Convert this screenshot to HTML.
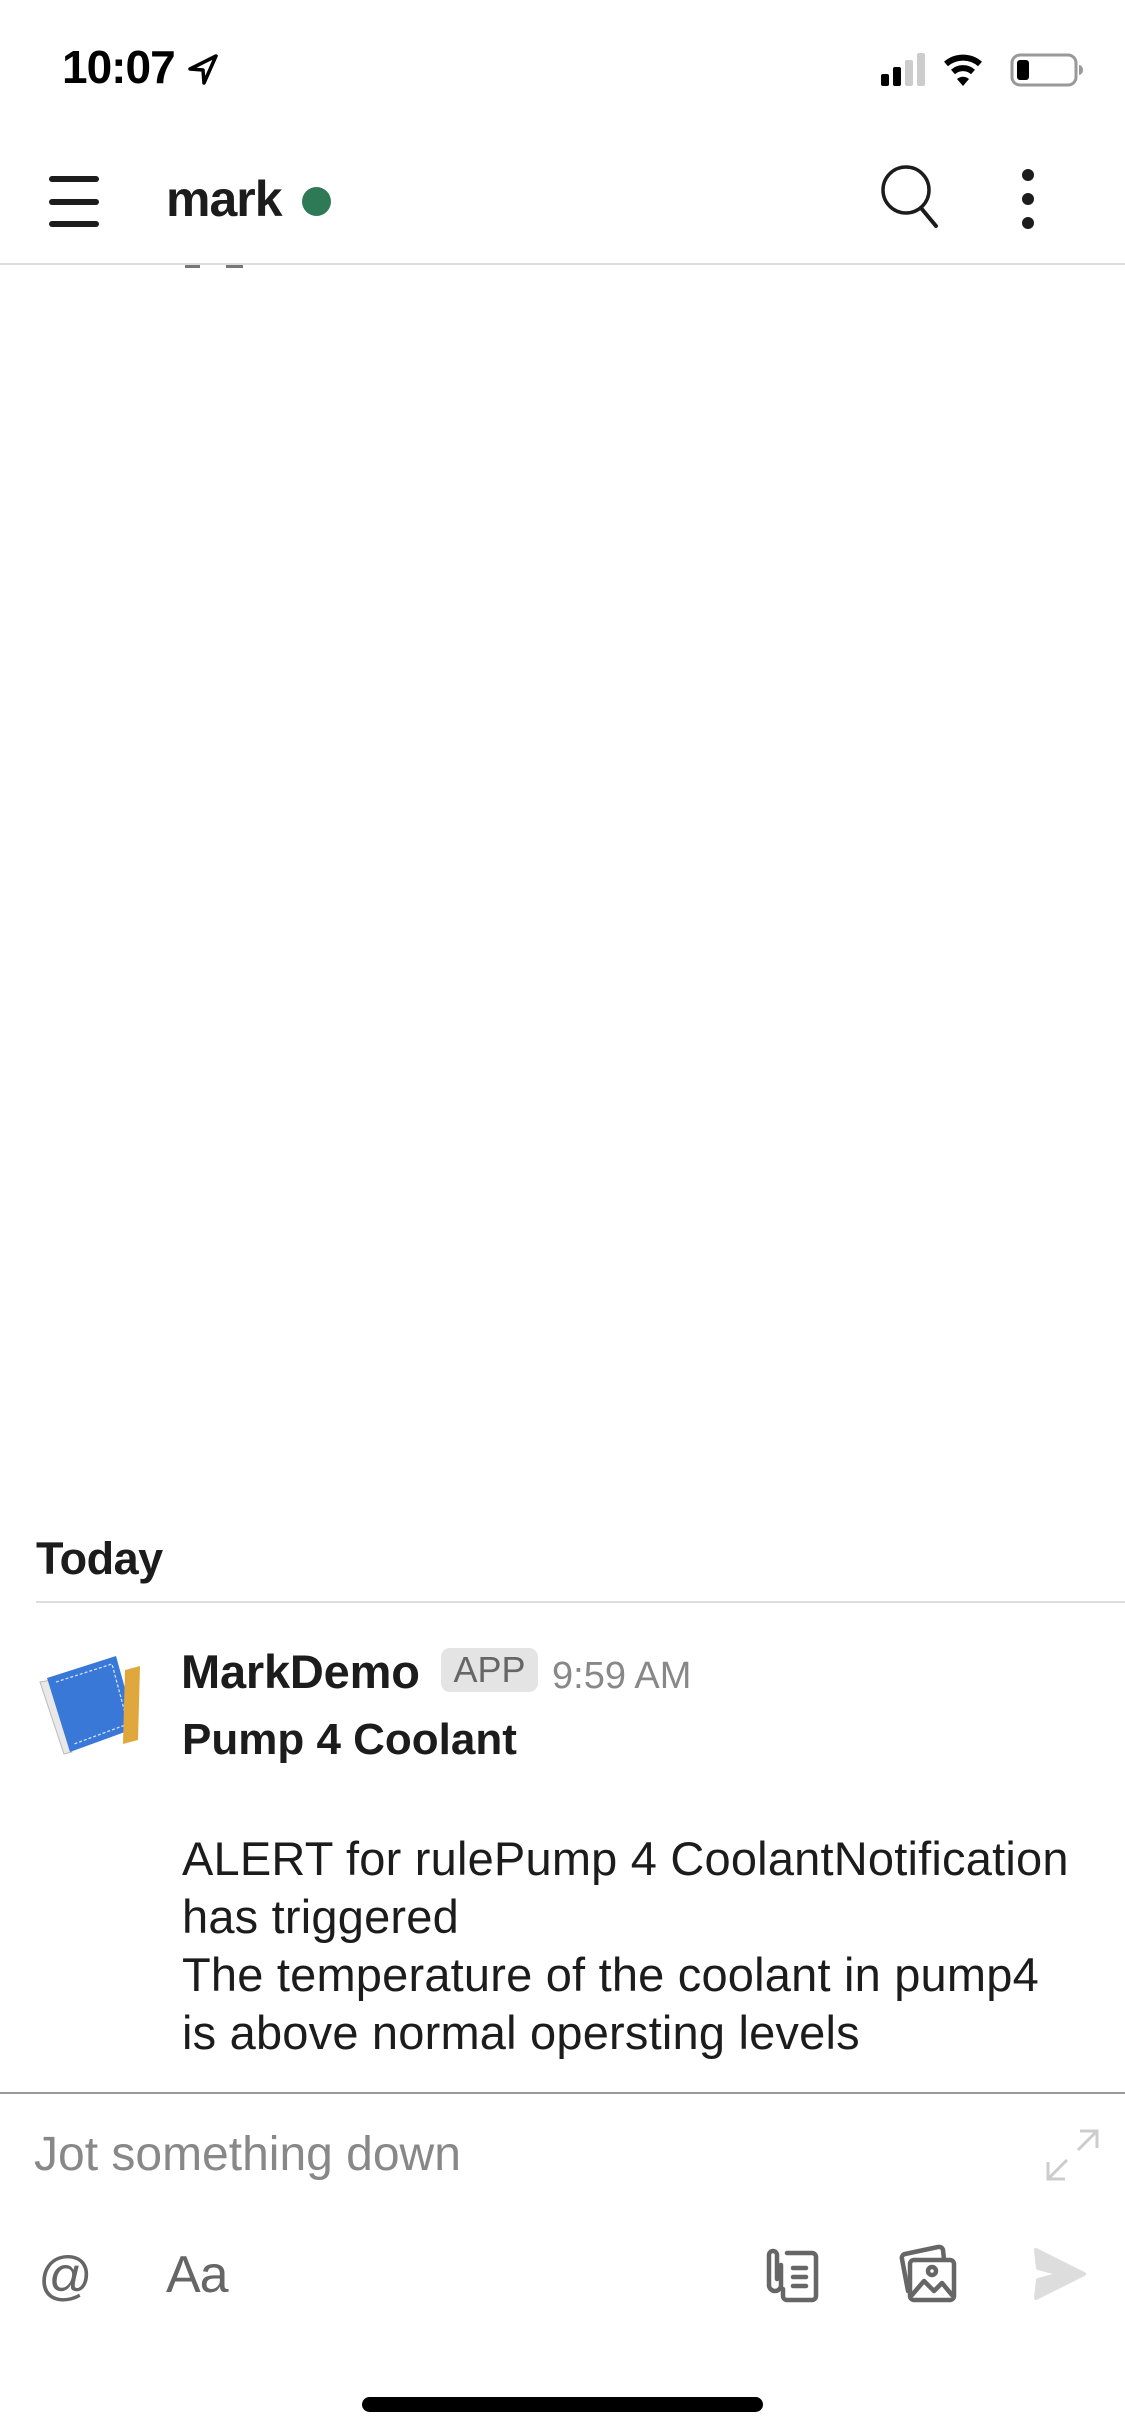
<!DOCTYPE html>
<html><head><meta charset="utf-8"><style>
*{margin:0;padding:0;box-sizing:border-box}
body{width:1125px;height:2436px;background:#fff;position:relative;overflow:hidden;font-family:"Liberation Sans",sans-serif;color:#1d1c1d}
.a{position:absolute;white-space:nowrap}
</style></head><body>
<div class="a" style="left:62px;top:40px;font-size:46px;font-weight:bold;letter-spacing:-1px;color:#000">10:07</div>
<svg class="a" style="left:186px;top:52px" width="34" height="34" viewBox="0 0 34 34"><path d="M30 4 L4 17 L17 18 L18 31 Z" fill="none" stroke="#000" stroke-width="3.5" stroke-linejoin="round"/></svg>
<svg class="a" style="left:878px;top:50px" width="210" height="40" viewBox="0 0 210 40">
<rect x="3" y="24" width="8" height="12" rx="2" fill="#000"/><rect x="15" y="17" width="8" height="19" rx="2" fill="#000"/>
<rect x="27" y="10" width="8" height="26" rx="2" fill="#ccc"/><rect x="39" y="3" width="8" height="33" rx="2" fill="#ccc"/>
<path d="M68 14 A26 26 0 0 1 102 14" fill="none" stroke="#000" stroke-width="6"/>
<path d="M75 22 A15 15 0 0 1 95 22" fill="none" stroke="#000" stroke-width="6"/>
<path d="M85 36 L79 29 A9 9 0 0 1 91 29 Z" fill="#000"/>
<rect x="134" y="5" width="64" height="30" rx="8" fill="none" stroke="#999" stroke-width="3"/>
<rect x="139" y="10" width="12" height="20" rx="3" fill="#000"/>
<path d="M201 15 a4 5 0 0 1 0 10" fill="#999"/>
</svg>
<div class="a" style="left:49px;top:176px;width:50px;height:6px;background:#1d1c1d;border-radius:3px"></div>
<div class="a" style="left:49px;top:199px;width:50px;height:6px;background:#1d1c1d;border-radius:3px"></div>
<div class="a" style="left:49px;top:221px;width:50px;height:6px;background:#1d1c1d;border-radius:3px"></div>
<div class="a" style="left:166px;top:170px;font-size:50px;font-weight:bold;letter-spacing:-1px">mark</div>
<div class="a" style="left:302px;top:187px;width:29px;height:29px;border-radius:50%;background:#2e7a57"></div>
<svg class="a" style="left:876px;top:160px" width="66" height="70" viewBox="0 0 66 70"><circle cx="30" cy="30" r="23" fill="none" stroke="#1d1c1d" stroke-width="3.5"/><path d="M45 48 L60 66" stroke="#1d1c1d" stroke-width="4" stroke-linecap="round"/></svg>
<div class="a" style="left:1022px;top:169px;width:12px;height:12px;border-radius:50%;background:#1d1c1d"></div>
<div class="a" style="left:1022px;top:193px;width:12px;height:12px;border-radius:50%;background:#1d1c1d"></div>
<div class="a" style="left:1022px;top:217px;width:12px;height:12px;border-radius:50%;background:#1d1c1d"></div>
<div class="a" style="left:0;top:263px;width:1125px;height:2px;background:#ddd"></div>
<div class="a" style="left:185px;top:265px;width:15px;height:3px;background:#777"></div>
<div class="a" style="left:226px;top:265px;width:17px;height:3px;background:#777"></div>

<div class="a" style="left:36px;top:1533px;font-size:45px;font-weight:bold;letter-spacing:-0.5px">Today</div>
<div class="a" style="left:36px;top:1601px;width:1089px;height:2px;background:#ddd"></div>

<svg class="a" style="left:30px;top:1640px" width="130" height="130" viewBox="0 0 130 130">
<path d="M10 42 L22 40 L42 112 L34 114 Z" fill="#e8e8e8" stroke="#bbb" stroke-width="1"/>
<path d="M17 38 L86 16 L106 88 L40 112 Z" fill="#3a78d8"/>
<path d="M26 42 L82 24 L98 84 L44 104" fill="none" stroke="#cfe0f7" stroke-width="1.3" stroke-dasharray="3 2"/>
<path d="M95 30 L110 26 L108 100 L93 104 Z" fill="#e0a83c"/>
</svg>
<div class="a" style="left:181px;top:1644px;font-size:47px;font-weight:bold;letter-spacing:-0.2px">MarkDemo</div>
<div class="a" style="left:441px;top:1648px;width:97px;height:44px;background:#e4e4e4;border-radius:9px;color:#666;font-size:36px;text-align:center;line-height:44px">APP</div>
<div class="a" style="left:552px;top:1655px;font-size:38px;color:#888">9:59 AM</div>
<div class="a" style="left:182px;top:1715px;font-size:44px;font-weight:bold;letter-spacing:0px">Pump 4 Coolant</div>
<div class="a" style="left:182px;top:1830px;font-size:47px;line-height:58px;letter-spacing:0.2px">ALERT for rulePump 4 CoolantNotification<br>has triggered<br>The temperature of the coolant in pump4<br>is above normal opersting levels</div>

<div class="a" style="left:0;top:2092px;width:1125px;height:2px;background:#999"></div>
<div class="a" style="left:34px;top:2127px;font-size:48px;color:#888">Jot something down</div>
<svg class="a" style="left:1044px;top:2127px" width="58" height="56" viewBox="0 0 58 56"><path d="M36 4 H53 V21 M53 4 L34 23 M4 35 V52 H21 M4 52 L23 33" fill="none" stroke="#ccc" stroke-width="3"/></svg>
<div class="a" style="left:38px;top:2245px;font-size:54px;color:#666">@</div>
<div class="a" style="left:166px;top:2245px;font-size:52px;color:#666;letter-spacing:-1px">Aa</div>
<svg class="a" style="left:765px;top:2245px" width="58" height="58" viewBox="0 0 58 58"><g fill="none" stroke="#666" stroke-width="4.5" stroke-linecap="round" stroke-linejoin="round"><path d="M16 20 V40 a6 6 0 0 1 -12 0 V10 a4 4 0 0 1 8 0 V34"/><path d="M22 8 H47 a4 4 0 0 1 4 4 V51 a4 4 0 0 1 -4 4 H22 a4 4 0 0 1 -4 -4 V44"/><path d="M28 23 H41 M28 32 H41 M28 41 H41"/></g></svg>
<svg class="a" style="left:894px;top:2243px" width="66" height="62" viewBox="0 0 66 62"><g fill="none" stroke="#666" stroke-width="4.5" stroke-linecap="round" stroke-linejoin="round"><path d="M14 48 L8 16 a4 4 0 0 1 3 -5 L44 4 a4 4 0 0 1 5 3 L50 16"/><rect x="16" y="17" width="44" height="40" rx="4"/><circle cx="38" cy="28" r="4"/><path d="M18 52 L30 38 L40 48 L48 40 L58 52"/></g></svg>
<svg class="a" style="left:1030px;top:2246px" width="58" height="56" viewBox="0 0 58 56"><path d="M6 4 L54 28 L6 52 L8 34 L30 28 L8 22 Z" fill="#ddd" stroke="#ddd" stroke-width="4" stroke-linejoin="round"/></svg>

<div class="a" style="left:362px;top:2397px;width:401px;height:15px;border-radius:8px;background:#000"></div>
</body></html>
